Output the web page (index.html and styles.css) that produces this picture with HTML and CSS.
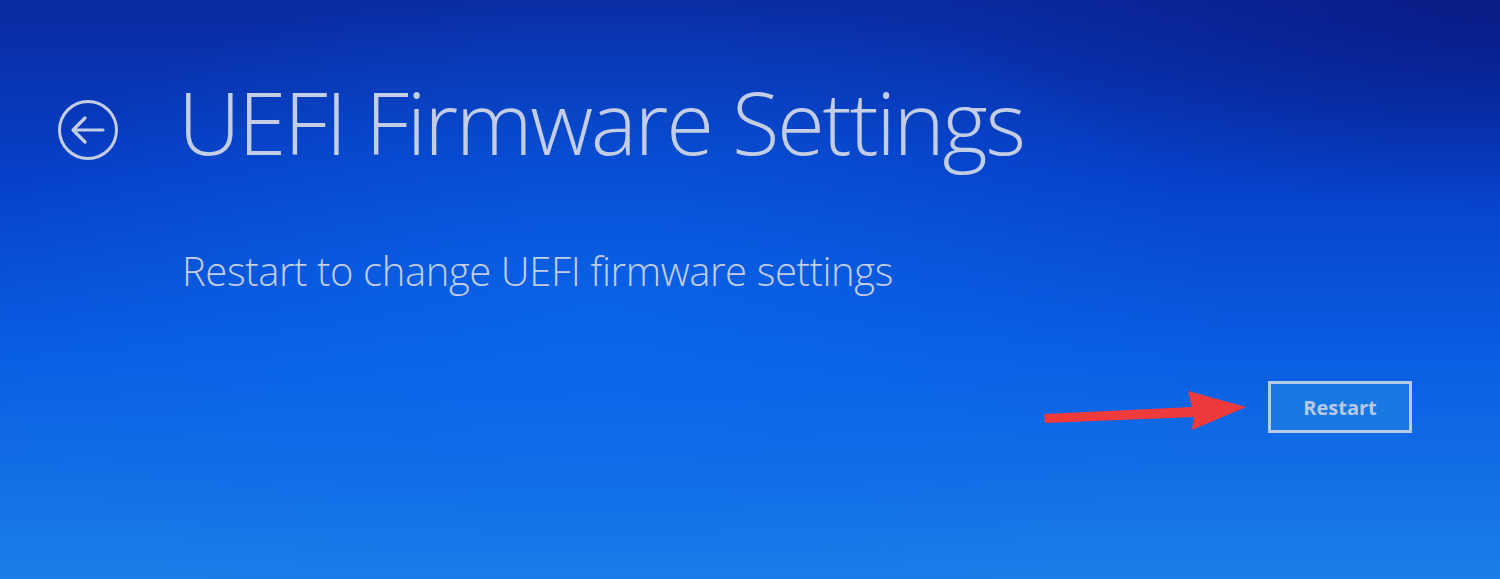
FILE: index.html
```html
<!DOCTYPE html>
<html lang="en">
<head>
  <meta charset="UTF-8" />
  <title>UEFI Firmware Settings</title>
  <link rel="stylesheet" href="styles.css">
</head>
<body>
  <main class="screen">
    <header class="title-row">
      <button class="back-btn" aria-label="Back">
        <svg width="64" height="64" viewBox="0 0 64 64">
          <circle cx="32" cy="32" r="28.5" fill="none" stroke="#c3cde6" stroke-width="3"/>
          <path d="M47 32 H18 M29 20 L17 32 L29 44" fill="none" stroke="#c3cde6" stroke-width="3.2" stroke-linecap="round" stroke-linejoin="round"/>
        </svg>
      </button>
      <h1>UEFI Firmware Settings</h1>
    </header>

    <p class="subtitle">Restart to change UEFI firmware settings</p>

    <div class="actions">
      <svg class="pointer" width="205" height="52" viewBox="0 0 205 52">
        <path d="M0 33 L148 26 L144 10 L202 26 L148 49 L150 36 L1 42 Z" fill="#ee3a3a"/>
      </svg>
      <button class="restart-btn">Restart</button>
    </div>
  </main>
</body>
</html>
```

FILE: styles.css
```css
* {
  margin: 0;
  padding: 0;
  box-sizing: border-box;
}

body {
  width: 1500px;
  height: 579px;
  overflow: hidden;
  font-family: 'Open Sans', 'Noto Sans', sans-serif;
  color: #c3cde6;
  background:
    radial-gradient(ellipse 700px 260px at 100% 0%, rgba(8, 20, 120, 0.7), rgba(8, 20, 120, 0) 80%),
    radial-gradient(ellipse 900px 500px at 40% 55%, rgba(10, 110, 240, 0.55), rgba(10, 110, 240, 0) 70%),
    linear-gradient(180deg, #0a2aa0 0%, #0640c8 30%, #0a5ee2 62%, #1a7ee8 100%);
}

.screen {
  padding: 56px 0 0 56px;
}

.title-row {
  display: flex;
  align-items: center;
  gap: 58px;
}

.back-btn {
  width: 64px;
  height: 64px;
  border: none;
  background: transparent;
  display: flex;
  margin-top: 18px;
}

h1 {
  font-size: 87px;
  font-weight: 300;
  letter-spacing: -2.3px;
  line-height: 130px;
}

.subtitle {
  margin: 57px 0 0 126px;
  font-size: 40px;
  font-weight: 300;
  letter-spacing: -0.4px;
}

.actions {
  display: flex;
  align-items: flex-start;
  justify-content: flex-end;
  margin: 83px 88px 0 0;
  gap: 19px;
}

.restart-btn {
  width: 144px;
  height: 52px;
  border: 3px solid #b6c9e6;
  background: #1878e2;
  color: #b9c9e4;
  font-family: 'Open Sans', 'Noto Sans', sans-serif;
  font-size: 20px;
  font-weight: 700;
}
```
